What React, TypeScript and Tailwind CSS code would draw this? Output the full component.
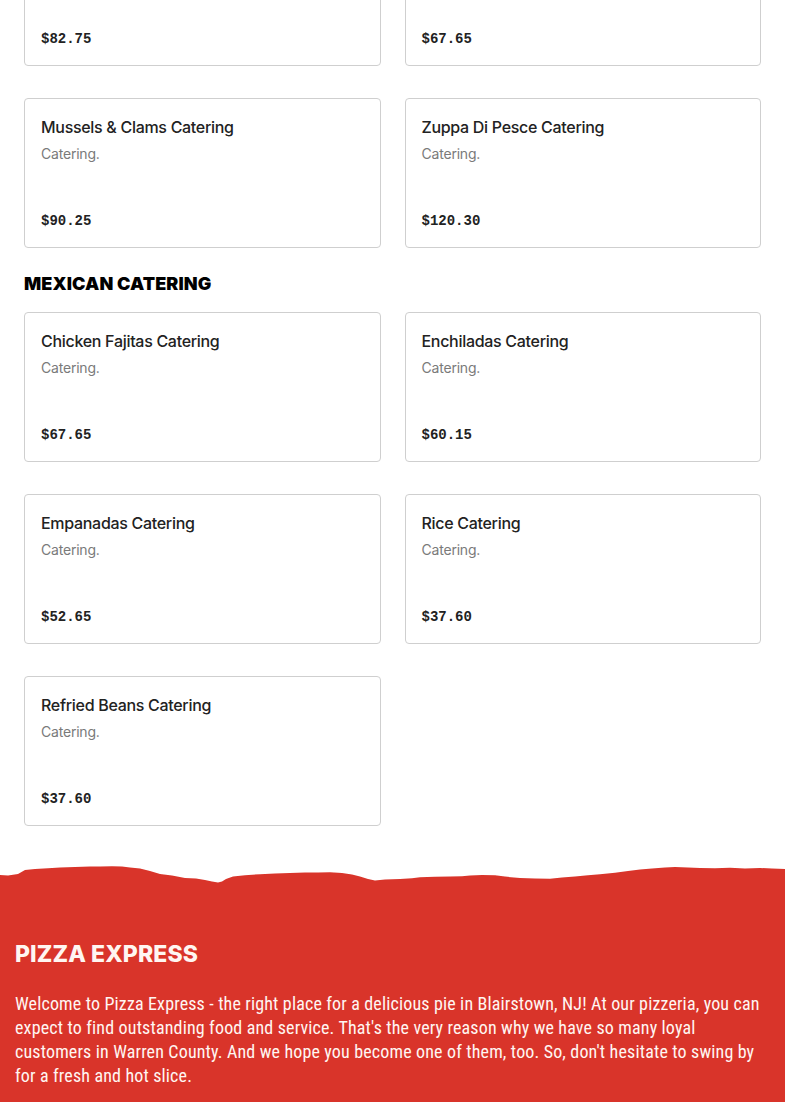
import React from "react";

// Menu data for the catering cards
interface MenuItem {
  name: string;
  description: string;
  price: string;
}

const seafoodTail: MenuItem[] = [
  { name: "Shrimp Scampi Catering", description: "Catering.", price: "$82.75" },
  { name: "Fried Calamari Catering", description: "Catering.", price: "$67.65" },
  { name: "Mussels & Clams Catering", description: "Catering.", price: "$90.25" },
  { name: "Zuppa Di Pesce Catering", description: "Catering.", price: "$120.30" },
];

const mexican: MenuItem[] = [
  { name: "Chicken Fajitas Catering", description: "Catering.", price: "$67.65" },
  { name: "Enchiladas Catering", description: "Catering.", price: "$60.15" },
  { name: "Empanadas Catering", description: "Catering.", price: "$52.65" },
  { name: "Rice Catering", description: "Catering.", price: "$37.60" },
  { name: "Refried Beans Catering", description: "Catering.", price: "$37.60" },
];

function MenuCard({ item }: { item: MenuItem }) {
  return (
    <div className="h-[150px] flex flex-col border border-[#cfcfcf] rounded-[4px] bg-white px-4 pt-4 pb-4">
      <h3 className="font-['Inter',sans-serif] text-[16px] leading-6 font-medium text-[#222] tracking-[-0.3px]">
        {item.name}
      </h3>
      <p className="mt-[5px] font-['Inter',sans-serif] text-[14px] leading-5 text-[#7a7a7a] tracking-[-0.2px]">
        {item.description}
      </p>
      <span className="mt-auto font-['Liberation_Mono',monospace] text-[14px] leading-5 font-bold text-[#222]">
        {item.price}
      </span>
    </div>
  );
}

// Torn paper edge above the red footer
function TornEdge() {
  return (
    <svg
      className="block w-full h-[22px]"
      viewBox="0 0 785 22"
      preserveAspectRatio="none"
    >
      <path
        fill="#d9342a"
        d="M0 11 L8 11.5 L18 10 L25 6 L35 5 L48 4.2 L60 3.6 L75 3 L90 2.6 L100 2.4 L112 2.2 L122 2.6 L130 3.4 L140 4.5 L150 7 L160 10 L172 11.5 L185 14 L196 14.5 L205 16 L212 17.5 L218 18.6 L222 17.5 L226 15 L233 12.6 L245 11.2 L260 10.2 L275 9.6 L290 9 L305 8.6 L318 8.4 L330 8.2 L342 9 L352 10.5 L360 12.5 L368 15 L375 16.4 L385 15.4 L400 15 L412 14.2 L420 13.2 L435 12.8 L450 12.6 L462 12.2 L470 11.6 L482 11 L495 11.2 L505 12.6 L520 14 L535 14.6 L550 14.8 L562 13.6 L575 12.4 L588 11.2 L600 10.2 L615 8.8 L628 7 L640 5.6 L652 4.6 L665 3.4 L675 3 L688 3.4 L700 4 L715 4.2 L730 3.8 L745 4.4 L760 4 L772 4.6 L785 5 L785 22 L0 22 Z"
      />
    </svg>
  );
}

export default function App() {
  return (
    <div className="min-h-screen bg-white overflow-hidden">
      <div className="-mt-[84px] px-6">
        <div className="grid grid-cols-2 gap-x-6 gap-y-8">
          {seafoodTail.map((item) => (
            <MenuCard key={item.name} item={item} />
          ))}
        </div>

        <h2 className="mt-6 mb-4 font-['Inter',sans-serif] text-[18px] leading-6 font-black text-black tracking-[0.1px]">
          MEXICAN CATERING
        </h2>

        <div className="grid grid-cols-2 gap-x-6 gap-y-8">
          {mexican.map((item) => (
            <MenuCard key={item.name} item={item} />
          ))}
        </div>
      </div>

      <div className="mt-[38px]">
        <TornEdge />
        <div className="bg-[#d9342a] px-[15px] pt-[54px] pb-10 text-[#fff6f2]">
          <h2 className="font-['Inter',sans-serif] text-[23px] leading-[28px] font-extrabold tracking-[0.1px]">
            PIZZA EXPRESS
          </h2>
          <p className="mt-[24px] font-['Roboto_Condensed','Liberation_Sans_Narrow','DejaVu_Sans_Condensed','Roboto',sans-serif] font-stretch-condensed text-[18px] leading-6 font-normal tracking-[0.15px]">
            Welcome to Pizza Express - the right place for a delicious pie in Blairstown, NJ! At our pizzeria, you can expect to find outstanding food and service. That's the very reason why we have so many loyal customers in Warren County. And we hope you become one of them, too. So, don't hesitate to swing by for a fresh and hot slice.
          </p>
        </div>
      </div>
    </div>
  );
}
